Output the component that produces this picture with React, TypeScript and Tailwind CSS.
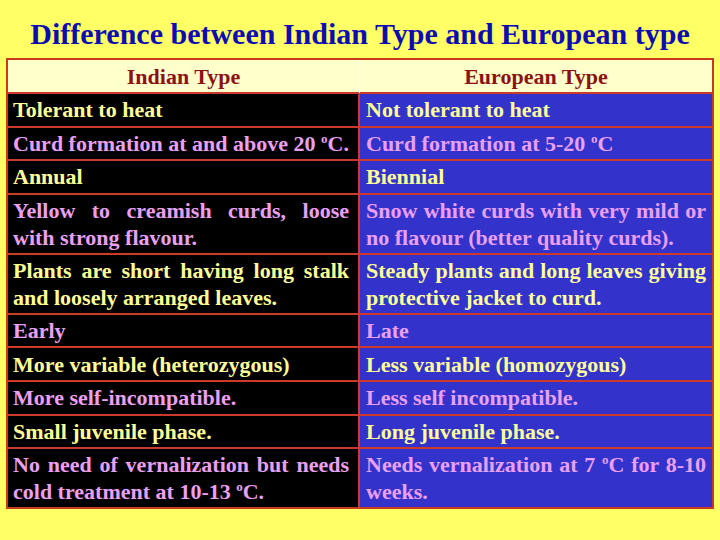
import React from "react"

type Row = {
  left: React.ReactNode
  right: React.ReactNode
  tone: "yellow" | "pink"
  tall?: boolean
}

const Deg = () => <sup className="text-[13px] -top-[8px]">o</sup>

const rows: Row[] = [
  { left: "Tolerant to heat", right: "Not tolerant to heat", tone: "yellow" },
  {
    left: <>Curd formation at and above 20 <Deg />C.</>,
    right: <>Curd formation at 5-20 <Deg />C</>,
    tone: "pink",
  },
  { left: "Annual", right: "Biennial", tone: "yellow" },
  {
    left: "Yellow to creamish curds, loose with strong flavour.",
    right: "Snow white curds with very mild or no flavour (better quality curds).",
    tone: "pink",
    tall: true,
  },
  {
    left: "Plants are short having long stalk and loosely arranged leaves.",
    right: "Steady plants and long leaves giving protective jacket to curd.",
    tone: "yellow",
    tall: true,
  },
  { left: "Early", right: "Late", tone: "pink" },
  { left: "More variable (heterozygous)", right: "Less variable (homozygous)", tone: "yellow" },
  { left: "More self-incompatible.", right: "Less self incompatible.", tone: "pink" },
  { left: "Small juvenile phase.", right: "Long juvenile phase.", tone: "yellow" },
  {
    left: <>No need of vernalization but needs cold treatment at 10-13 <Deg />C.</>,
    right: <>Needs vernalization at 7 <Deg />C for 8-10 weeks.</>,
    tone: "pink",
    tall: true,
  },
]

export default function App() {
  return (
    <div className="w-[720px] h-[540px] bg-[#ffff66] pt-[16px] px-[6px] font-['Liberation_Serif']">
      <h1 className="text-center text-[30px] leading-[36px] font-bold text-[#0c0cb0] whitespace-nowrap">
        Difference between Indian Type and European type
      </h1>

      <div className="mt-[6px] border-2 border-[#c83a1c] text-[22px] font-bold">
        <div className="grid grid-cols-2 h-[32px] bg-[#ffffcc] text-[#8c1212]">
          <div className="flex items-center justify-center border-r border-[#fffff0]">Indian Type</div>
          <div className="flex items-center justify-center">European Type</div>
        </div>

        {rows.map((row, i) => {
          const color = row.tone === "yellow" ? "text-[#ffff99]" : "text-[#eaa0f2]"
          return (
            <div
              key={i}
              className={`grid grid-cols-2 border-t-2 border-[#cc3a2a] leading-[27px] ${color} ${
                row.tall ? "h-[60px]" : "h-[33.6px] whitespace-nowrap"
              }`}
            >
              <div className="bg-black border-r-2 border-[#cc3a2a] pl-[5px] pr-[9px] flex items-center">
                <p className="w-full text-justify">{row.left}</p>
              </div>
              <div className="bg-[#3333cc] pl-[6px] pr-[6px] flex items-center">
                <p className="w-full text-justify">{row.right}</p>
              </div>
            </div>
          )
        })}
      </div>
    </div>
  )
}
